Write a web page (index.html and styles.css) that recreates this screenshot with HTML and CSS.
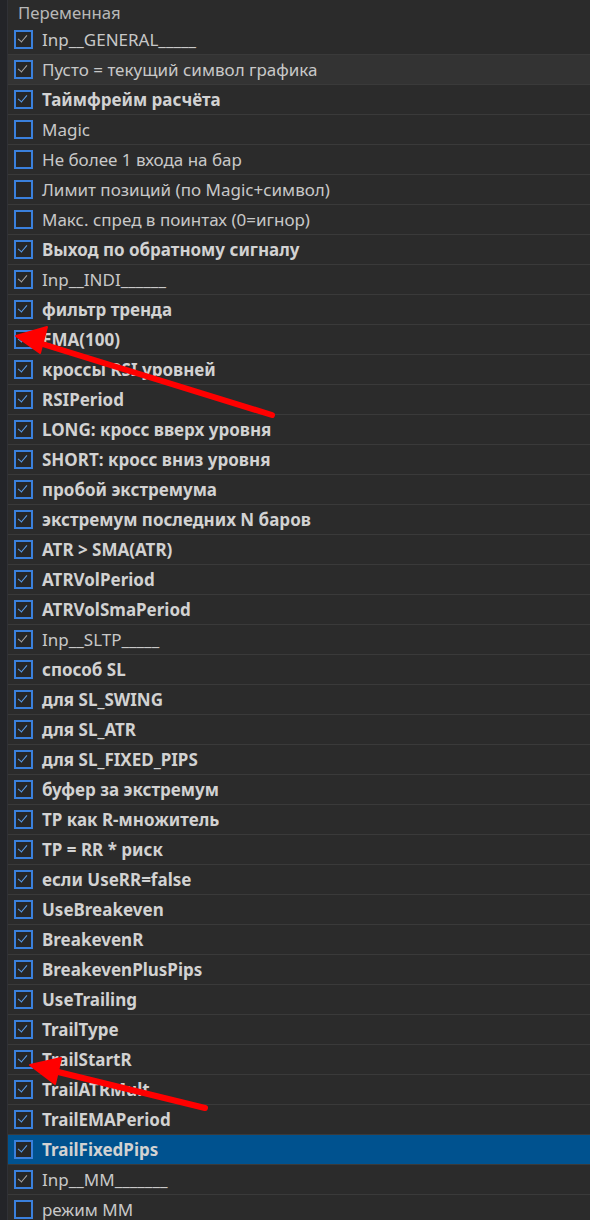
FILE: index.html
```html
<!DOCTYPE html>
<html lang="ru">
<head>
<meta charset="utf-8">
<link rel="stylesheet" href="styles.css">
</head>
<body>
<div class="page">
  <div class="strip"></div>
  <div class="panel">
    <div class="header">Переменная</div>
    <div class="list">
      <div class="row"><span class="cb on grey"></span><span class="lbl">Inp__GENERAL_____</span></div>
      <div class="row hover"><span class="cb on grey"></span><span class="lbl">Пусто = текущий символ графика</span></div>
      <div class="row"><span class="cb on"></span><span class="lbl b">Таймфрейм расчёта</span></div>
      <div class="row"><span class="cb"></span><span class="lbl">Magic</span></div>
      <div class="row"><span class="cb"></span><span class="lbl">Не более 1 входа на бар</span></div>
      <div class="row"><span class="cb"></span><span class="lbl">Лимит позиций (по Magic+символ)</span></div>
      <div class="row"><span class="cb"></span><span class="lbl">Макс. спред в поинтах (0=игнор)</span></div>
      <div class="row"><span class="cb on"></span><span class="lbl b">Выход по обратному сигналу</span></div>
      <div class="row"><span class="cb on grey"></span><span class="lbl">Inp__INDI______</span></div>
      <div class="row"><span class="cb on"></span><span class="lbl b">фильтр тренда</span></div>
      <div class="row"><span class="cb on"></span><span class="lbl b">EMA(100)</span></div>
      <div class="row"><span class="cb on"></span><span class="lbl b">кроссы RSI уровней</span></div>
      <div class="row"><span class="cb on"></span><span class="lbl b">RSIPeriod</span></div>
      <div class="row"><span class="cb on"></span><span class="lbl b">LONG: кросс вверх уровня</span></div>
      <div class="row"><span class="cb on"></span><span class="lbl b">SHORT: кросс вниз уровня</span></div>
      <div class="row"><span class="cb on"></span><span class="lbl b">пробой экстремума</span></div>
      <div class="row"><span class="cb on"></span><span class="lbl b">экстремум последних N баров</span></div>
      <div class="row"><span class="cb on"></span><span class="lbl b">ATR &gt; SMA(ATR)</span></div>
      <div class="row"><span class="cb on"></span><span class="lbl b">ATRVolPeriod</span></div>
      <div class="row"><span class="cb on"></span><span class="lbl b">ATRVolSmaPeriod</span></div>
      <div class="row"><span class="cb on grey"></span><span class="lbl">Inp__SLTP_____</span></div>
      <div class="row"><span class="cb on"></span><span class="lbl b">способ SL</span></div>
      <div class="row"><span class="cb on"></span><span class="lbl b">для SL_SWING</span></div>
      <div class="row"><span class="cb on"></span><span class="lbl b">для SL_ATR</span></div>
      <div class="row"><span class="cb on"></span><span class="lbl b">для SL_FIXED_PIPS</span></div>
      <div class="row"><span class="cb on"></span><span class="lbl b">буфер за экстремум</span></div>
      <div class="row"><span class="cb on"></span><span class="lbl b">TP как R-множитель</span></div>
      <div class="row"><span class="cb on"></span><span class="lbl b">TP = RR * риск</span></div>
      <div class="row"><span class="cb on"></span><span class="lbl b">если UseRR=false</span></div>
      <div class="row"><span class="cb on"></span><span class="lbl b">UseBreakeven</span></div>
      <div class="row"><span class="cb on"></span><span class="lbl b">BreakevenR</span></div>
      <div class="row"><span class="cb on"></span><span class="lbl b">BreakevenPlusPips</span></div>
      <div class="row"><span class="cb on"></span><span class="lbl b">UseTrailing</span></div>
      <div class="row"><span class="cb on"></span><span class="lbl b">TrailType</span></div>
      <div class="row"><span class="cb on"></span><span class="lbl b">TrailStartR</span></div>
      <div class="row"><span class="cb on"></span><span class="lbl b">TrailATRMult</span></div>
      <div class="row"><span class="cb on"></span><span class="lbl b">TrailEMAPeriod</span></div>
      <div class="row selected"><span class="cb on"></span><span class="lbl b">TrailFixedPips</span></div>
      <div class="row"><span class="cb on grey"></span><span class="lbl">Inp__MM_______</span></div>
      <div class="row"><span class="cb"></span><span class="lbl">режим MM</span></div>
    </div>
  </div>
  <svg class="annot" width="590" height="1220" viewBox="0 0 590 1220">
    <g fill="#ff0000" stroke="#ff0000" stroke-linecap="round">
      <line x1="272" y1="415" x2="36" y2="342" stroke-width="6"/>
      <polygon points="16,336 47,327 40,353" stroke-width="2" stroke-linejoin="round"/>
      <line x1="205" y1="1108" x2="46" y2="1069" stroke-width="6"/>
      <polygon points="30,1065 61,1058 55,1084" stroke-width="2" stroke-linejoin="round"/>
    </g>
  </svg>
</div>
</body>
</html>
```
FILE: styles.css
```css
html, body {
  margin: 0;
  padding: 0;
  background: #2b2b2b;
}
.page {
  position: relative;
  width: 590px;
  height: 1220px;
  overflow: hidden;
  display: flex;
  font-family: "Noto Sans", "Open Sans", sans-serif;
}
.strip {
  width: 7px;
  flex: none;
  background: #232428;
  border-right: 1px solid #303136;
}
.panel {
  flex: 1;
  background: #2b2b2b;
  display: flex;
  flex-direction: column;
}
.header {
  height: 27px;
  padding-left: 10px;
  line-height: 25px;
  font-size: 16.8px;
  color: #b8b8b8;
}
.list {
  display: flex;
  flex-direction: column;
}
.row {
  height: 29px;
  border-bottom: 1px solid #3a3a3a;
  display: flex;
  align-items: center;
  padding-left: 6px;
  gap: 9px;
}
.row.hover {
  background: #333333;
}
.row.selected {
  background: #00528f;
}
.cb {
  width: 15px;
  height: 15px;
  border: 2px solid #3a80dc;
  background: #262626;
  flex: none;
  position: relative;
}
.cb.on::after {
  content: "";
  position: absolute;
  left: 4px;
  top: 1px;
  width: 4px;
  height: 8px;
  border-right: 1.6px solid #5aa0f0;
  border-bottom: 1.6px solid #5aa0f0;
  transform: rotate(40deg);
}
.cb.on.grey::after {
  border-color: #a8a8a8;
}
.lbl {
  font-size: 17px;
  line-height: 22px;
  color: #c8c8c8;
  white-space: nowrap;
}
.lbl.b {
  font-weight: 700;
  color: #d2d2d2;
}
.annot {
  position: absolute;
  left: 0;
  top: 0;
  pointer-events: none;
}
```
